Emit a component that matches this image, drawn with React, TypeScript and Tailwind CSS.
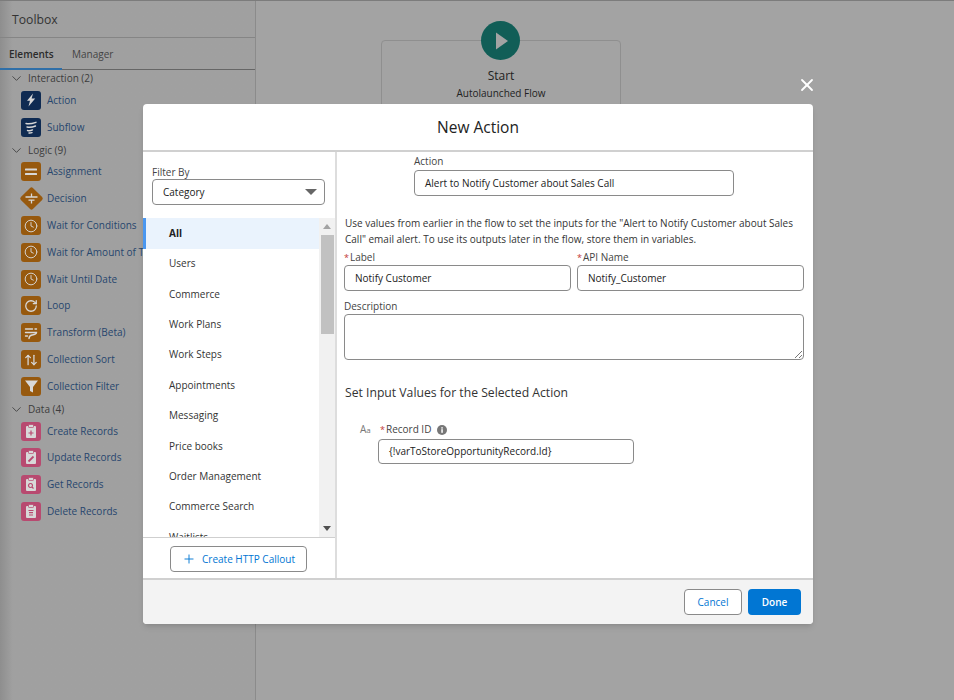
import { ChevronDown, Clock, RotateCw, ArrowUpDown, Plus, X } from "lucide-react";
import type { ReactNode } from "react";

const Tile = ({ color, children }: { color: string; children: ReactNode }) => (
  <div className={`w-5 h-[19px] rounded-[3px] flex items-center justify-center shrink-0 text-[#d8d8d8] ${color}`}>
    {children}
  </div>
);

const navy = "bg-[#0f2b52]";
const orange = "bg-[#97590e]";
const pink = "bg-[#b84a70]";

const Clipboard = ({ mark }: { mark: ReactNode }) => (
  <svg width="14" height="15" viewBox="0 0 14 15" fill="currentColor">
    <rect x="2" y="2" width="10" height="12" rx="1" />
    <rect x="4.5" y="0.5" width="5" height="3" rx="0.6" stroke="#b84a70" strokeWidth="0.7" />
    <g stroke="#b84a70" strokeWidth="1.2" fill="none">{mark}</g>
  </svg>
);

const elementIcons: Record<string, ReactNode> = {
  Action: (
    <Tile color={navy}>
      <svg width="12" height="14" viewBox="0 0 12 14" fill="currentColor">
        <path d="M8 0.5 2 7.8h3L3.5 13.5 10.2 5.6H6.6L8 0.5Z" />
      </svg>
    </Tile>
  ),
  Subflow: (
    <Tile color={navy}>
      <svg width="14" height="14" viewBox="0 0 14 14" fill="none" stroke="currentColor" strokeWidth="1.4" strokeLinecap="round">
        <path d="M2 3.5c3 .8 6 .2 10-1.2M3 7c2.5.6 5.5.2 8.5-1M3.5 10.5c2 .4 3.5.2 5-.6M5 13c1 .1 2 0 3-.4" />
      </svg>
    </Tile>
  ),
  Assignment: (
    <Tile color={orange}>
      <svg width="12" height="8" viewBox="0 0 12 8" fill="currentColor">
        <rect y="0.5" width="12" height="2" rx="0.5" />
        <rect y="5" width="12" height="2" rx="0.5" />
      </svg>
    </Tile>
  ),
  Decision: (
    <div className="w-5 h-[19px] flex items-center justify-center shrink-0">
      <div className="relative w-[17px] h-[17px] rotate-45 rounded-[2px] bg-[#97590e] shrink-0">
        <svg className="absolute inset-0 -rotate-45" width="17" height="17" viewBox="0 0 17 17" fill="none" stroke="#d8d8d8" strokeWidth="1.3">
          <path d="M2.5 7h12M5.5 10.2h6M8.5 3.5V7M8.5 10.2v3.3" />
        </svg>
      </div>
    </div>
  ),
  Clock: (
    <Tile color={orange}>
      <Clock size={14} strokeWidth={1.6} />
    </Tile>
  ),
  Loop: (
    <Tile color={orange}>
      <RotateCw size={14} strokeWidth={2.2} />
    </Tile>
  ),
  Transform: (
    <Tile color={orange}>
      <svg width="14" height="14" viewBox="0 0 14 14" fill="none" stroke="currentColor" strokeWidth="1.4" strokeLinecap="round">
        <path d="M1.5 3h7M11 3h1.5M1.5 6.5h11c0 2-2.5 2-4.5 2.5S5 11 5 12.5M1.5 10h2" />
      </svg>
    </Tile>
  ),
  Sort: (
    <Tile color={orange}>
      <ArrowUpDown size={14} strokeWidth={2.2} />
    </Tile>
  ),
  Filter: (
    <Tile color={orange}>
      <svg width="15" height="15" viewBox="0 0 15 15" fill="currentColor">
        <path d="M1 1.5h13L9 8v5.5l-3-1.5V8L1 1.5Z" />
      </svg>
    </Tile>
  ),
  Create: (
    <Tile color={pink}>
      <Clipboard mark={<path d="M7 6.5v5M4.5 9h5" />} />
    </Tile>
  ),
  Update: (
    <Tile color={pink}>
      <Clipboard mark={<path d="M4.5 11.5 9.5 6.5" strokeWidth="1.8" />} />
    </Tile>
  ),
  Get: (
    <Tile color={pink}>
      <Clipboard mark={<path d="M6.5 6.5a2 2 0 1 0 .01 0M8 10l1.5 1.5" />} />
    </Tile>
  ),
  Delete: (
    <Tile color={pink}>
      <Clipboard mark={<path d="M4.5 6.5h5M5 8.7h4M5 11h4" />} />
    </Tile>
  ),
};

const groups = [
  {
    name: "Interaction (2)",
    items: [
      ["Action", "Action"],
      ["Subflow", "Subflow"],
    ],
  },
  {
    name: "Logic (9)",
    items: [
      ["Assignment", "Assignment"],
      ["Decision", "Decision"],
      ["Wait for Conditions", "Clock"],
      ["Wait for Amount of Time", "Clock"],
      ["Wait Until Date", "Clock"],
      ["Loop", "Loop"],
      ["Transform (Beta)", "Transform"],
      ["Collection Sort", "Sort"],
      ["Collection Filter", "Filter"],
    ],
  },
  {
    name: "Data (4)",
    items: [
      ["Create Records", "Create"],
      ["Update Records", "Update"],
      ["Get Records", "Get"],
      ["Delete Records", "Delete"],
    ],
  },
];

const categories = [
  "All",
  "Users",
  "Commerce",
  "Work Plans",
  "Work Steps",
  "Appointments",
  "Messaging",
  "Price books",
  "Order Management",
  "Commerce Search",
  "Waitlists",
];

const Field = ({ label, required, value, className, labelClass = "h-[16px]" }: { label: string; required?: boolean; value: string; className?: string; labelClass?: string }) => (
  <div className={className}>
    <div className={`flex items-center text-[#444] leading-none ${labelClass}`}>
      {required && <span className="text-[#c23934] mr-px text-[9px]">*</span>}
      {label}
    </div>
    <div className="h-[26px] flex items-center px-[10px] border border-[#8a8a8a] rounded-[4px] bg-white text-[#222] whitespace-nowrap">
      {value}
    </div>
  </div>
);

export default function App() {
  return (
    <div className="relative h-[700px] w-[954px] overflow-hidden bg-[#a3a3a3] font-['Open_Sans',sans-serif] text-[10px] border-t border-[#7c7c7c]">
      <div className="flex h-full">
        <aside className="w-[256px] shrink-0 bg-[#a0a0a0] border-r border-[#8b8b8b] bg-gradient-to-r from-[#8e8e8e] to-[#a0a0a0] to-[5%]">
          <div className="h-[37px] pt-[2px] flex items-center pl-[12px] text-[12.2px] text-[#333] border-b border-[#858585]">Toolbox</div>
          <div className="h-[32px] flex items-stretch border-b border-[#666]">
            <div className="w-[62px] pl-[9px] pt-[2px] flex items-center font-semibold text-[#2b2b2b] border-b-2 border-[#2f6fa8] -mb-px">Elements</div>
            <div className="pl-[10px] pt-[2px] flex items-center text-[#444]">Manager</div>
          </div>
          {groups.map((group, i) => (
            <div key={group.name}>
              <div className={`h-[18px] flex items-center pl-[9px] gap-[4px] text-[#3c3c3c] ${i > 0 ? "pt-[2px]" : "-mt-px"}`}>
                <ChevronDown size={15} strokeWidth={1.5} className="text-[#444]" />
                {group.name}
              </div>
              <div className="flex flex-col">
                {group.items.map(([name, icon]) => (
                  <div key={name} className="h-[26.8px] flex items-center pl-[21px] gap-[6px] text-[#27466e] whitespace-nowrap">
                    {elementIcons[icon]}
                    {name}
                  </div>
                ))}
              </div>
            </div>
          ))}
        </aside>
        <main className="flex-1 pt-[39px] pl-[125px]">
          <div className="relative w-[240px] h-[100px] border border-[#8f8f8f] rounded-[4px] flex flex-col items-center pt-[26px]">
            <div className="absolute -top-[20px] left-[99px] w-[39px] h-[39px] rounded-full bg-[#115e57] flex items-center justify-center">
              <svg width="12" height="18" viewBox="0 0 12 18" fill="#a3a3a3" className="ml-[3px]">
                <path d="M0 0.5 12 9 0 17.5Z" />
              </svg>
            </div>
            <div className="text-[12px] text-[#222]">Start</div>
            <div className="text-[#222] mt-px">Autolaunched Flow</div>
          </div>
        </main>
      </div>

      <button className="absolute left-[797px] top-[74px] text-white">
        <X size={20} strokeWidth={2.2} />
      </button>

      <div className="absolute left-[143px] top-[103px] w-[670px] h-[520px] bg-white rounded-[4px] flex flex-col overflow-hidden shadow-md">
        <header className="h-[48px] pt-[2px] shrink-0 flex items-center justify-center border-b-2 border-[#d0d0d0] text-[15.5px] text-[#222]">New Action</header>
        <div className="flex-1 flex min-h-0">
          <div className="w-[194px] shrink-0 border-r-2 border-[#dddddd] flex flex-col">
            <div className="h-[66px] shrink-0 pt-[14px] pl-[9px] pr-[10px]">
              <div className="text-[#444] leading-[12px]">Filter By</div>
              <div className="mt-[1px] h-[26px] flex items-center justify-between pl-[10px] pr-[7px] border border-[#8a8a8a] rounded-[4px] text-[#222]">
                Category
                <span className="w-0 h-0 border-x-[6px] border-x-transparent border-t-[6px] border-t-[#666]" />
              </div>
            </div>
            <div className="flex-1 min-h-0 flex border-b border-[#cfcfcf]">
              <div className="flex-1 overflow-hidden">
                {categories.map((cat, i) => (
                  <div
                    key={cat}
                    className={i === 0
                      ? "h-[30.5px] flex items-center pl-[23px] bg-[#eaf3fd] border-l-[3px] border-[#4a97f0] font-bold text-[#222]"
                      : "h-[30.4px] flex items-center pl-[26px] text-[#333]"}
                  >
                    {cat}
                  </div>
                ))}
              </div>
              <div className="w-[16px] shrink-0 bg-[#f1f1f1] flex flex-col items-center">
                <span className="h-[17px] flex items-center">
                  <span className="block w-0 h-0 border-x-[4px] border-x-transparent border-b-[5px] border-b-[#a3a3a3]" />
                </span>
                <div className="w-[13px] h-[99px] bg-[#c1c1c1]" />
                <div className="flex-1" />
                <span className="h-[17px] flex items-center">
                  <span className="block w-0 h-0 border-x-[4px] border-x-transparent border-t-[5px] border-t-[#505050]" />
                </span>
              </div>
            </div>
            <div className="h-[40px] shrink-0 pl-[27px] pt-[8px]">
              <button className="w-[137px] h-[26px] flex items-center justify-center gap-[6px] border border-[#8a8a8a] rounded-[4px] text-[#0176d3]">
                <Plus size={14} strokeWidth={1.6} />
                Create HTTP Callout
              </button>
            </div>
          </div>
          <div className="flex-1 min-w-0 pl-[7px] pr-[9px]">
            <Field label="Action" labelClass="h-[18px]" value="Alert to Notify Customer about Sales Call" className="ml-[70px] w-[320px]" />
            <p className="mt-[19px] pl-[1px] leading-[16px] text-[#333]">
              Use values from earlier in the flow to set the inputs for the "Alert to Notify Customer about Sales Call" email alert. To use its outputs later in the flow, store them in variables.
            </p>
            <div className="flex gap-[6px] mt-[2px]">
              <Field label="Label" required value="Notify Customer" className="flex-1" />
              <Field label="API Name" required value="Notify_Customer" className="flex-1" />
            </div>
            <div className="mt-[7px] h-[16px] flex items-center text-[#444]">Description</div>
            <div className="relative h-[46px] border border-[#8a8a8a] rounded-[4px]">
              <svg className="absolute right-[1px] bottom-[1px]" width="8" height="8" viewBox="0 0 8 8" stroke="#777" strokeWidth="1">
                <path d="M1 8 8 1M5 8l3-3" />
              </svg>
            </div>
            <h2 className="mt-[24px] pl-[1px] text-[12.2px] leading-[18px] text-[#333]">Set Input Values for the Selected Action</h2>
            <div className="flex mt-[20px] pl-[16px]">
              <div className="w-[18px] pt-[2px] text-[#777] leading-none text-[10px]">
                A<span className="text-[8px]">a</span>
              </div>
              <div className="w-[256px]">
                <div className="h-[15px] flex items-center text-[#444] pl-[2px]">
                  <span className="text-[#c23934] mr-px text-[9px]">*</span>
                  Record ID
                  <svg width="10" height="10" viewBox="0 0 10 10" className="ml-[6px]">
                    <circle cx="5" cy="5" r="5" fill="#777" />
                    <rect x="4.3" y="4.2" width="1.5" height="3.6" fill="#fff" />
                    <rect x="4.3" y="2.2" width="1.5" height="1.4" fill="#fff" />
                  </svg>
                </div>
                <div className="h-[25px] mt-[2px] flex items-center px-[10px] border border-[#8a8a8a] rounded-[4px] text-[#222]">
                  {"{!varToStoreOpportunityRecord.Id}"}
                </div>
              </div>
            </div>
          </div>
        </div>
        <footer className="h-[46px] shrink-0 border-t-2 border-[#d0d0d0] bg-[#f3f3f3] flex items-center justify-end gap-[6px] pr-[12px]">
          <button className="w-[58px] h-[26px] border border-[#8a8a8a] rounded-[4px] bg-white text-[#0176d3]">Cancel</button>
          <button className="w-[53px] h-[26px] rounded-[4px] bg-[#0176d3] text-white font-semibold">Done</button>
        </footer>
      </div>
    </div>
  );
}
